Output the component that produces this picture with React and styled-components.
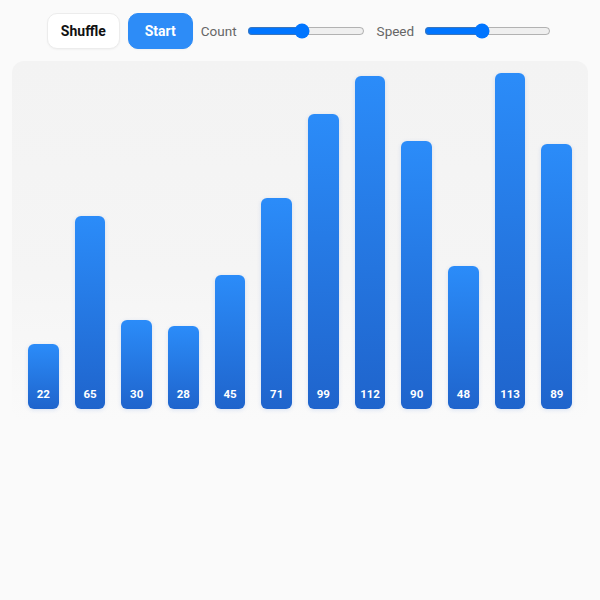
import React, { useState } from 'react'
import styled, { createGlobalStyle } from 'styled-components'

const GlobalStyle = createGlobalStyle`
  html, body {
    margin: 0;
    background: #fafafa;
    font-family: Roboto, "Liberation Sans", sans-serif;
  }
`

const Page = styled.div`
  width: 600px;
  height: 600px;
  box-sizing: border-box;
  padding: 12px 12px 0;
  display: flex;
  flex-direction: column;
  gap: 12px;
`

const Toolbar = styled.div`
  display: flex;
  align-items: center;
  justify-content: center;
  gap: 8px;
  height: 36px;
  margin-top: 1px;
`

const Button = styled.button`
  height: 36px;
  padding: ${p => (p.$primary ? '0 16px' : '0 13px')};
  border-radius: 10px;
  font-family: inherit;
  font-size: 14px;
  font-weight: 700;
  cursor: pointer;
  border: 1px solid ${p => (p.$primary ? '#2d8cf7' : '#ececec')};
  background: ${p => (p.$primary ? '#2d8cf7' : '#ffffff')};
  color: ${p => (p.$primary ? '#ffffff' : '#111111')};
  box-shadow: 0 1px 2px rgba(0, 0, 0, 0.04);
`

const Label = styled.label`
  font-size: 13.5px;
  color: #666;
  margin-left: ${p => (p.$spaced ? '2px' : '0')};
`

const Range = styled.input`
  width: ${p => p.$w}px;
  margin: 0 2px;
`

const Chart = styled.div`
  height: 360px;
  box-sizing: border-box;
  padding: 12px 16px;
  border-radius: 12px;
  background: linear-gradient(#f3f3f3, #f5f5f5 60%, #fafafa);
  display: flex;
  align-items: flex-end;
  gap: 16px;
`

const Bar = styled.div`
  flex: 1;
  border-radius: 6px;
  background: linear-gradient(#2b8cf9, #1f64cc);
  box-shadow: 0 1px 4px rgba(30, 90, 200, 0.15);
  display: flex;
  align-items: flex-end;
  justify-content: center;
  padding-bottom: 8px;
  box-sizing: border-box;
  color: #fff;
  font-size: 11.5px;
  font-weight: 700;
`

const values = [22, 65, 30, 28, 45, 71, 99, 112, 90, 48, 113, 89]

export default function App() {
  const [count, setCount] = useState(12)
  const [speed, setSpeed] = useState(45)

  return (
    <>
      <GlobalStyle />
      <Page>
        <Toolbar>
          <Button>Shuffle</Button>
          <Button $primary>Start</Button>
          <Label>Count</Label>
          <Range $w={118} type="range" min="5" max="20" value={count} onChange={e => setCount(+e.target.value)} />
          <Label $spaced>Speed</Label>
          <Range $w={127} type="range" min="0" max="100" value={speed} onChange={e => setSpeed(+e.target.value)} />
        </Toolbar>
        <Chart>
          {values.map((v, i) => (
            <Bar key={i} style={{ height: Math.round(v * 2.975) }}>{v}</Bar>
          ))}
        </Chart>
      </Page>
    </>
  )
}
